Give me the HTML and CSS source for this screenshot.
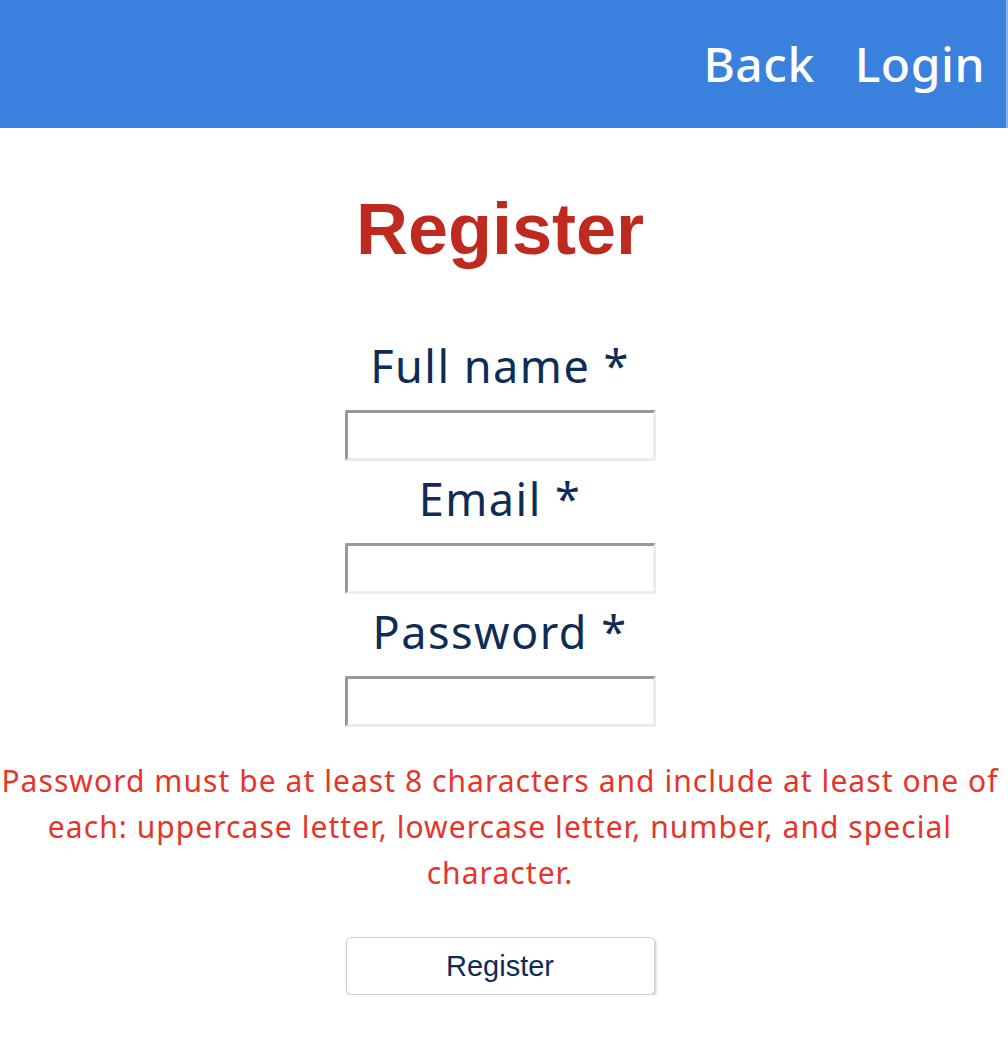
FILE: index.html
```html
<!DOCTYPE html>
<html lang="en">
<head>
<meta charset="utf-8">
<title>Register</title>
<link rel="stylesheet" href="styles.css">
</head>
<body>
<header class="topbar">
  <nav class="nav">
    <a class="nav-link" href="#">Back</a>
    <a class="nav-link" href="#">Login</a>
  </nav>
</header>
<main class="page">
  <h1 class="title">Register</h1>
  <form class="form">
    <label class="field-label" for="name">Full name *</label>
    <input class="field-input" id="name" type="text">
    <label class="field-label" for="email">Email *</label>
    <input class="field-input" id="email" type="email">
    <label class="field-label" for="password">Password *</label>
    <input class="field-input" id="password" type="password">
    <p class="error">Password must be at least 8 characters and include at least one of each: uppercase letter, lowercase letter, number, and special character.</p>
    <button class="submit" type="button">Register</button>
  </form>
</main>
</body>
</html>
```
FILE: styles.css
```css
html, body {
  margin: 0;
  padding: 0;
  background: #ffffff;
}

body {
  font-family: "Noto Sans", "Open Sans", sans-serif;
}

.topbar {
  height: 128px;
  background: #3a80dd;
  border-right: 2px solid #8db2e4;
  display: flex;
  justify-content: flex-end;
  align-items: center;
}

.nav {
  display: flex;
  gap: 40px;
  padding-right: 21px;
}

.nav-link {
  color: #ffffff;
  text-decoration: none;
  font-size: 48px;
  font-weight: 500;
  line-height: 60px;
  letter-spacing: 0.5px;
}

.page {
  width: 1000px;
  display: flex;
  flex-direction: column;
  align-items: center;
}

.title {
  margin: 61px 0 0;
  font-family: "Liberation Sans", Arial, sans-serif;
  font-weight: bold;
  font-size: 72px;
  line-height: 80px;
  color: #bf2a20;
}

.form {
  display: flex;
  flex-direction: column;
  align-items: center;
  width: 100%;
  margin-top: 72px;
}

.field-label {
  font-size: 45px;
  line-height: 50px;
  letter-spacing: 1.5px;
  color: #0e2c55;
  margin-bottom: 19px;
}

.field-input {
  box-sizing: border-box;
  width: 311px;
  height: 51px;
  margin: 0 0 13px;
  border-style: solid;
  border-width: 3px;
  border-color: #999999 #ececec #ececec #999999;
  border-radius: 2px;
  background: #ffffff;
}

.field-input:last-of-type {
  margin-bottom: 0;
}

.error {
  margin: 31px 0 0;
  width: 100%;
  text-align: center;
  color: #e5352a;
  font-size: 30px;
  line-height: 46px;
  letter-spacing: 1.05px;
}

.submit {
  margin-top: 41px;
  width: 309px;
  height: 58px;
  background: #ffffff;
  border: 1px solid #cfcfcf;
  border-radius: 5px;
  box-shadow: 1px 2px 3px rgba(0, 0, 0, 0.22);
  font-family: "Liberation Sans", Arial, sans-serif;
  font-size: 29px;
  color: #0e2c55;
}
```
